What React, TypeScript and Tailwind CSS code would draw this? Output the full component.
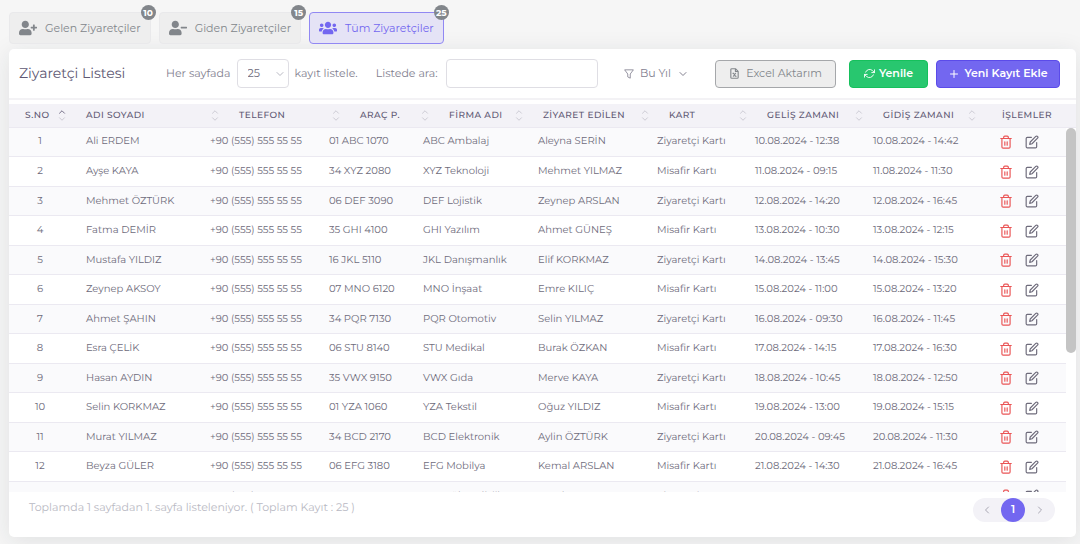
import { useState } from "react";
import { FaUserPlus, FaUserMinus, FaUsers } from "react-icons/fa";
import { ChevronDown, ChevronLeft, ChevronRight, ChevronUp, Plus } from "lucide-react";
import clsx from "clsx";

interface Visitor {
  name: string;
  plate: string;
  company: string;
  host: string;
  card: string;
  arrival: string;
  departure: string;
}

const PHONE = "+90 (555) 555 55 55";

const row = (
  name: string,
  plate: string,
  company: string,
  host: string,
  card: string,
  date: string,
  from: string,
  to: string,
): Visitor => ({
  name,
  plate,
  company,
  host,
  card: `${card} Kartı`,
  arrival: `${date}.08.2024 - ${from}`,
  departure: `${date}.08.2024 - ${to}`,
});

const visitors: Visitor[] = [
  row("Ali ERDEM", "01 ABC 1070", "ABC Ambalaj", "Aleyna SERİN", "Ziyaretçi", "10", "12:38", "14:42"),
  row("Ayşe KAYA", "34 XYZ 2080", "XYZ Teknoloji", "Mehmet YILMAZ", "Misafir", "11", "09:15", "11:30"),
  row("Mehmet ÖZTÜRK", "06 DEF 3090", "DEF Lojistik", "Zeynep ARSLAN", "Ziyaretçi", "12", "14:20", "16:45"),
  row("Fatma DEMİR", "35 GHI 4100", "GHI Yazılım", "Ahmet GÜNEŞ", "Misafir", "13", "10:30", "12:15"),
  row("Mustafa YILDIZ", "16 JKL 5110", "JKL Danışmanlık", "Elif KORKMAZ", "Ziyaretçi", "14", "13:45", "15:30"),
  row("Zeynep AKSOY", "07 MNO 6120", "MNO İnşaat", "Emre KILIÇ", "Misafir", "15", "11:00", "13:20"),
  row("Ahmet ŞAHIN", "34 PQR 7130", "PQR Otomotiv", "Selin YILMAZ", "Ziyaretçi", "16", "09:30", "11:45"),
  row("Esra ÇELİK", "06 STU 8140", "STU Medikal", "Burak ÖZKAN", "Misafir", "17", "14:15", "16:30"),
  row("Hasan AYDIN", "35 VWX 9150", "VWX Gıda", "Merve KAYA", "Ziyaretçi", "18", "10:45", "12:50"),
  row("Selin KORKMAZ", "01 YZA 1060", "YZA Tekstil", "Oğuz YILDIZ", "Misafir", "19", "13:00", "15:15"),
  row("Murat YILMAZ", "34 BCD 2170", "BCD Elektronik", "Aylin ÖZTÜRK", "Ziyaretçi", "20", "09:45", "11:30"),
  row("Beyza GÜLER", "06 EFG 3180", "EFG Mobilya", "Kemal ARSLAN", "Misafir", "21", "14:30", "16:45"),
  row("Can YILMAZ", "35 HIJ 4190", "HIJ Mühendislik", "Burak YALÇIN", "Ziyaretçi", "22", "10:15", "12:30"),
];

const tabs = [
  { id: "in", label: "Gelen Ziyaretçiler", count: 10, icon: FaUserPlus },
  { id: "out", label: "Giden Ziyaretçiler", count: 15, icon: FaUserMinus },
  { id: "all", label: "Tüm Ziyaretçiler", count: 25, icon: FaUsers },
];

const columns = [
  { label: "S.NO", width: "w-[59px]" },
  { label: "ADI SOYADI", width: "w-[153px]" },
  { label: "TELEFON", width: "w-[121px]" },
  { label: "ARAÇ P.", width: "w-[89px]" },
  { label: "FİRMA ADI", width: "w-[94px]" },
  { label: "ZİYARET EDİLEN", width: "w-[126px]" },
  { label: "KART", width: "w-[98px]" },
  { label: "GELİŞ ZAMANI", width: "w-[116px]" },
  { label: "GİDİŞ ZAMANI", width: "w-[113px]" },
  { label: "İŞLEMLER", width: "w-[98px]" },
];

const bodyWidths = [
  "w-[62px]",
  "w-[124px]",
  "w-[119px]",
  "w-[94px]",
  "w-[115px]",
  "w-[119px]",
  "w-[98px]",
  "w-[118px]",
  "w-[114px]",
  "w-[94px]",
];

function TrashIcon() {
  return (
    <svg className="h-[14px] w-[14px]" viewBox="0 0 24 24" fill="none" stroke="currentColor" strokeWidth="2" strokeLinecap="round" strokeLinejoin="round">
      <path d="M3 6h18M5 6v14.500a2 2 0 0 0 2 2h10a2 2 0 0 0 2-2V6M8 6V4a2 2 0 0 1 2-2h4a2 2 0 0 1 2 2v2M10 11.500v6M14 11.500v6" />
    </svg>
  );
}

function EditIcon() {
  return (
    <svg className="h-[14px] w-[14px]" viewBox="0 0 24 24" fill="none" stroke="currentColor" strokeWidth="2" strokeLinecap="round" strokeLinejoin="round">
      <path d="M11 4H4a2 2 0 0 0-2 2v14a2 2 0 0 0 2 2h14a2 2 0 0 0 2-2v-7" />
      <path d="M18.500 2.500a2.120 2.120 0 0 1 3 3L12 15l-4 1 1-4z" />
    </svg>
  );
}

function RefreshIcon() {
  return (
    <svg className="h-[11px] w-[11px]" viewBox="0 0 24 24" fill="none" stroke="currentColor" strokeWidth="2" strokeLinecap="round" strokeLinejoin="round">
      <path d="M23 4v6h-6M1 20v-6h6" />
      <path d="M3.510 9a9 9 0 0 1 14.850-3.360L23 10M1 14l4.640 4.360A9 9 0 0 0 20.490 15" />
    </svg>
  );
}

function FilterIcon() {
  return (
    <svg className="h-[10px] w-[10px]" viewBox="0 0 24 24" fill="none" stroke="currentColor" strokeWidth="2" strokeLinejoin="round">
      <path d="M1.500 2h21L15 12v10l-6-3v-7z" />
    </svg>
  );
}

function ExcelIcon() {
  return (
    <svg className="h-[11px] w-[11px]" viewBox="0 0 24 24" fill="none" stroke="currentColor" strokeWidth="2.400" strokeLinecap="round" strokeLinejoin="round">
      <path d="M14 1.500H6a2 2 0 0 0-2 2v17a2 2 0 0 0 2 2h12a2 2 0 0 0 2-2V7.500zM14 1.500v6h6" />
      <path d="M9.500 11.500l5 6.500M14.500 11.500L9.500 18M8.500 11.500h2M13.500 18h2" />
    </svg>
  );
}

function SortIcon({ active }: { active: boolean }) {
  return (
    <span className="flex flex-col items-center text-[#c4c3cc]">
      <ChevronUp className={clsx("h-[10px] w-[10px]", active && "text-[#5e5873]")} />
      <ChevronDown className="-mt-[3px] h-[10px] w-[10px]" />
    </span>
  );
}

function VisitorTabs() {
  const [current, setCurrent] = useState("all");

  return (
    <nav className="flex gap-2">
      {tabs.map(({ id, label, count, icon: Icon }) => (
        <button
          key={id}
          type="button"
          onClick={() => setCurrent(id)}
          className={clsx(
            "relative flex h-8 items-center gap-2 rounded-[4px] border px-[9px] text-[11px]",
            current === id
              ? "border-[#9188f3] bg-[#e5e3f6] text-[#7367f0]"
              : "border-[#e9e9eb] bg-[#eeeeee] text-[#82868b]",
          )}
        >
          <Icon className="h-[18px] w-[18px]" />
          {label}
          <span className="absolute -top-2 -right-1.5 flex h-[15px] min-w-[15px] items-center justify-center rounded-full bg-[#82868b] text-[9px] leading-none font-bold text-white">
            {count}
          </span>
        </button>
      ))}
    </nav>
  );
}

function Toolbar() {
  return (
    <div className="flex h-[51px] items-center border-b-2 border-[#f3f2f5] pr-4 pl-[10px] text-[11px] text-[#82808f]">
      <h1 className="w-[147px] text-[14px] text-[#5e5873]">Ziyaretçi Listesi</h1>
      <label htmlFor="page-size">Her sayfada</label>
      <div className="relative mx-1.5 flex items-center">
        <select
          id="page-size"
          defaultValue="25"
          className="h-[29px] w-[52px] appearance-none rounded-[4px] border border-[#dfdee4] bg-white pl-[10px] text-[11px] text-[#6e6b7b]"
        >
          <option>10</option>
          <option>25</option>
          <option>50</option>
        </select>
        <ChevronDown className="pointer-events-none absolute right-[3px] h-3 w-3 text-[#b9b9c3]" />
      </div>
      <span>kayıt listele.</span>
      <label htmlFor="search" className="ml-[18px]">
        Listede ara:
      </label>
      <input id="search" type="text" className="ml-2 h-[29px] w-[152px] rounded-[4px] border border-[#dfdee4] bg-white px-2" />
      <div className="ml-auto flex items-center">
        <button type="button" className="mr-[26px] flex items-center gap-1.5">
          <FilterIcon />
          Bu Yıl
          <ChevronDown className="h-3 w-3" />
        </button>
        <button type="button" className="mr-[13px] flex h-[28px] w-[121px] items-center justify-center gap-1.5 rounded-[4px] border border-[#a5a7aa] bg-[#eeeeee] text-[#82868b]">
          <ExcelIcon />
          Excel Aktarım
        </button>
        <button type="button" className="mr-2 flex h-[28px] w-[79px] items-center justify-center gap-1 rounded-[4px] border border-[#16c05c] bg-[#28c76f] font-semibold text-white">
          <RefreshIcon />
          Yenile
        </button>
        <button type="button" className="flex h-[28px] w-[124px] items-center justify-center gap-1 rounded-[4px] border border-[#5b4be9] bg-[#7367f0] font-semibold text-white">
          <Plus className="h-3 w-3" />
          Yeni Kayıt Ekle
        </button>
      </div>
    </div>
  );
}

function VisitorTable() {
  return (
    <div className="mt-1">
      <table className="w-full table-fixed">
        <thead>
          <tr className="h-[23px] border-b border-[#ebe9f1] bg-[#f3f2f7] text-[9px] text-[#5e5873]">
            {columns.map(({ label, width }, index) => (
              <th key={label} className={clsx("p-0 font-medium tracking-wider", width)}>
                {index === columns.length - 1 ? (
                  label
                ) : (
                  <div className={clsx("flex items-center justify-between pr-px whitespace-nowrap", index === 0 ? "pl-4" : "pl-[18px]")}>
                    {label}
                    <SortIcon active={index === 0} />
                  </div>
                )}
              </th>
            ))}
          </tr>
        </thead>
      </table>
      <div className="flex h-[364px]">
        <div className="min-w-0 flex-1 overflow-y-auto [scrollbar-width:none]">
          <table className="w-full table-fixed text-[10px] text-[#6e6b7b]" aria-label="Ziyaretçi Listesi">
            <colgroup>
              {bodyWidths.map((width, index) => (
                <col key={index} className={width} />
              ))}
            </colgroup>
            <tbody>
              {visitors.map((visitor, index) => (
                <tr
                  key={visitor.name}
                  className="border-b border-[#ebe9f1] whitespace-nowrap odd:h-[29px] odd:bg-[#fafafc] even:h-[30px]"
                >
                  <td className="p-0 pb-0.5 text-center">{index + 1}</td>
                  <td className="pt-0 pb-0.5 pl-[15px]">{visitor.name}</td>
                  <td className="pt-0 pb-0.5 pl-[15px]">{PHONE}</td>
                  <td className="pt-0 pb-0.5 pl-[15px]">{visitor.plate}</td>
                  <td className="pt-0 pb-0.5 pl-[15px]">{visitor.company}</td>
                  <td className="pt-0 pb-0.5 pl-[15px]">{visitor.host}</td>
                  <td className="pt-0 pb-0.5 pl-[15px]">{visitor.card}</td>
                  <td className="pt-0 pb-0.5 pl-[15px]">{visitor.arrival}</td>
                  <td className="pt-0 pb-0.5 pl-[15px]">{visitor.departure}</td>
                  <td className="p-0">
                    <div className="flex justify-center gap-3">
                      <button type="button" aria-label="Sil" className="text-[#ea5455]">
                        <TrashIcon />
                      </button>
                      <button type="button" aria-label="Düzenle" className="text-[#6e6b7b]">
                        <EditIcon />
                      </button>
                    </div>
                  </td>
                </tr>
              ))}
            </tbody>
          </table>
        </div>
        <div className="w-[10px]">
          <div className="h-[62%] rounded-full bg-[#c4c4c4]" />
        </div>
      </div>
    </div>
  );
}

function Footer() {
  return (
    <div className="flex h-[45px] items-start justify-between pr-[21px] pl-5">
      <p className="pt-[7px] text-[11px] text-[#b9b9c3]">Toplamda 1 sayfadan 1. sayfa listeleniyor. ( Toplam Kayıt : 25 )</p>
      <div className="mt-1.5 flex h-6 items-center rounded-full bg-[#f3f2f7] text-[#a9a7b3]">
        <button type="button" aria-label="Önceki" className="flex w-7 justify-center">
          <ChevronLeft className="h-3 w-3" />
        </button>
        <button type="button" className="h-6 w-6 rounded-full bg-[#7367f0] text-[11px] font-semibold text-white">
          1
        </button>
        <button type="button" aria-label="Sonraki" className="flex w-[30px] justify-center">
          <ChevronRight className="h-3 w-3" />
        </button>
      </div>
    </div>
  );
}

export default function App() {
  return (
    <div className="min-h-screen bg-[#f6f6f6] pt-3 pr-1 pb-[7px] pl-[9px] font-['Montserrat','Inter',sans-serif] [text-rendering:geometricPrecision]">
      <VisitorTabs />
      <main className="mt-[5px] rounded-[5px] bg-white shadow-[0_4px_24px_0_rgba(34,41,47,0.1)]">
        <Toolbar />
        <VisitorTable />
        <Footer />
      </main>
    </div>
  );
}
